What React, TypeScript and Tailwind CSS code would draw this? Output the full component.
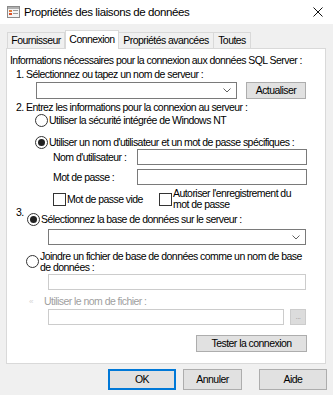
import React from "react";

function Radio({ checked }: { checked?: boolean }) {
  return (
    <span className="w-[13px] h-[13px] shrink-0 rounded-full border border-[#333333] bg-white flex items-center justify-center">
      {checked && <span className="w-[7px] h-[7px] rounded-full bg-[#222222]" />}
    </span>
  );
}

function Check() {
  return <span className="w-[13px] h-[13px] shrink-0 border border-[#333333] bg-white" />;
}

function Chevron() {
  return (
    <svg width="8" height="5" viewBox="0 0 8 5" className="shrink-0">
      <polyline points="0.5,0.5 4,4 7.5,0.5" fill="none" stroke="#606060" strokeWidth="1" />
    </svg>
  );
}

function Btn({ children, className }: { children: React.ReactNode; className: string }) {
  return (
    <div className={"bg-[#e1e1e1] border border-[#adadad] flex items-center justify-center " + className}>
      {children}
    </div>
  );
}

export default function App() {
  return (
    <div className="w-[333px] h-[395px] bg-[#f0f0f0] font-['Liberation_Sans',Arial,sans-serif] text-[10.5px] tracking-[-0.55px] leading-[13px] text-black whitespace-nowrap flex flex-col overflow-hidden">
      {/* Title bar */}
      <div className="h-[24px] bg-white flex items-center shrink-0">
        <svg width="14" height="14" viewBox="0 0 14 14" className="ml-[7px] shrink-0">
          <rect x="0.5" y="1.5" width="12" height="11" fill="#f4f4f4" stroke="#8a8a8a" />
          <rect x="1" y="2" width="11" height="2" fill="#b0b0b0" />
          <rect x="2" y="5" width="3" height="2" fill="#e07a3a" />
          <rect x="2" y="8" width="3" height="2" fill="#d9502b" />
          <rect x="6" y="5" width="5" height="1" fill="#9a9a9a" />
          <rect x="6" y="8" width="5" height="1" fill="#9a9a9a" />
        </svg>
        <span className="ml-[3px] text-[11.5px] tracking-[-0.4px] leading-[14px]">Propriétés des liaisons de données</span>
        <svg width="10" height="10" viewBox="0 0 10 10" className="ml-auto mr-[10px]">
          <path d="M0.5 0.5 L9.5 9.5 M9.5 0.5 L0.5 9.5" stroke="#111" strokeWidth="1" />
        </svg>
      </div>

      {/* Tabs */}
      <div className="h-[24px] flex items-end pl-[7px] shrink-0">
        <div className="h-[16px] w-[58px] border border-b-0 border-[#d9d9d9] bg-[#f0f0f0] flex items-center justify-center">Fournisseur</div>
        <div className="h-[19px] w-[54px] -mb-[1px] relative z-10 border border-b-0 border-[#d9d9d9] bg-white flex items-start justify-center pt-[2px]">Connexion</div>
        <div className="h-[16px] w-[95px] border border-b-0 border-l-0 border-[#d9d9d9] bg-[#f0f0f0] flex items-center justify-center">Propriétés avancées</div>
        <div className="h-[16px] w-[37px] border border-b-0 border-l-0 border-[#d9d9d9] bg-[#f0f0f0] flex items-center justify-center">Toutes</div>
      </div>

      {/* Panel */}
      <div className="ml-[6px] w-[320px] h-[316px] shrink-0 bg-white border border-[#d9d9d9] flex flex-col">
        <div className="mt-[5px] ml-[3px] h-[13px]">Informations nécessaires pour la connexion aux données SQL Server :</div>
        <div className="mt-[1px] ml-[9px] h-[13px]">1. Sélectionnez ou tapez un nom de serveur :</div>
        <div className="mt-[1px] ml-[29px] h-[17px] flex">
          <div className="w-[201px] h-[17px] border border-[#7a7a7a] flex items-center justify-end pr-[5px]">
            <Chevron />
          </div>
          <Btn className="ml-[9px] w-[60px] h-[17px]">Actualiser</Btn>
        </div>
        <div className="mt-[2px] ml-[9px] h-[13px]">2. Entrez les informations pour la connexion au serveur :</div>
        <div className="mt-[0px] ml-[28px] h-[13px] flex items-center">
          <Radio />
          <span className="ml-[1px]">Utiliser la sécurité intégrée de Windows NT</span>
        </div>
        <div className="mt-[9px] ml-[28px] h-[13px] flex items-center">
          <Radio checked />
          <span className="ml-[1px]">Utiliser un nom d'utilisateur et un mot de passe spécifiques :</span>
        </div>
        <div className="mt-[0px] ml-[46px] h-[16px] flex items-center">
          <span className="w-[84px]">Nom d'utilisateur :</span>
          <div className="w-[170px] h-[16px] border border-[#7a7a7a]" />
        </div>
        <div className="mt-[4px] ml-[46px] h-[16px] flex items-center">
          <span className="w-[84px]">Mot de passe :</span>
          <div className="w-[170px] h-[16px] border border-[#7a7a7a]" />
        </div>
        <div className="mt-[3px] ml-[46px] h-[22px] flex items-center">
          <Check />
          <span className="ml-[1px] w-[92px]">Mot de passe vide</span>
          <Check />
          <span className="ml-[1px] leading-[11px]">Autoriser l'enregistrement du<br />mot de passe</span>
        </div>
        <div className="mt-[2px] ml-[9px] h-[14px] flex items-start">
          <span className="w-[11px] -mt-[6px]">3.</span>
          <div className="flex items-center h-[14px]">
            <Radio checked />
            <span className="ml-[1px]">Sélectionnez la base de données sur le serveur :</span>
          </div>
        </div>
        <div className="mt-[3px] ml-[41px] w-[258px] h-[16px] border border-[#7a7a7a] flex items-center justify-end pr-[5px]">
          <Chevron />
        </div>
        <div className="mt-[5px] ml-[19px] h-[23px] flex items-center">
          <Radio />
          <span className="ml-[1px] leading-[11px]">Joindre un fichier de base de données comme un nom de base<br />de données :</span>
        </div>
        <div className="mt-[1px] ml-[41px] w-[258px] h-[16px] border border-[#cccccc]" />
        <div className="mt-[5px] ml-[22px] h-[13px] flex items-center">
          <span className="text-[8px] text-[#d4d4d4] w-[15px]">«</span>
          <span className="text-[#a0a0a0]">Utiliser le nom de fichier :</span>
        </div>
        <div className="mt-[1px] ml-[41px] h-[16px] flex">
          <div className="w-[236px] h-[16px] border border-[#cccccc]" />
          <div className="ml-[6px] w-[16px] h-[16px] bg-[#dcdcdc] border border-[#cccccc] flex items-center justify-center text-[8px] text-[#a0a0a0] leading-[8px]">...</div>
        </div>
        <div className="mt-[10px] ml-[189px] h-[17px] flex">
          <Btn className="w-[111px] h-[17px]">Tester la connexion</Btn>
        </div>
      </div>

      {/* Bottom buttons */}
      <div className="mt-[5px] h-[21px] flex shrink-0">
        <div className="ml-[108px] w-[68px] h-[21px] bg-[#e1e1e1] border-2 border-[#0078d7] flex items-center justify-center">OK</div>
        <Btn className="ml-[7px] w-[59px] h-[21px]">Annuler</Btn>
        <Btn className="ml-[17px] w-[68px] h-[21px]">Aide</Btn>
      </div>
    </div>
  );
}
